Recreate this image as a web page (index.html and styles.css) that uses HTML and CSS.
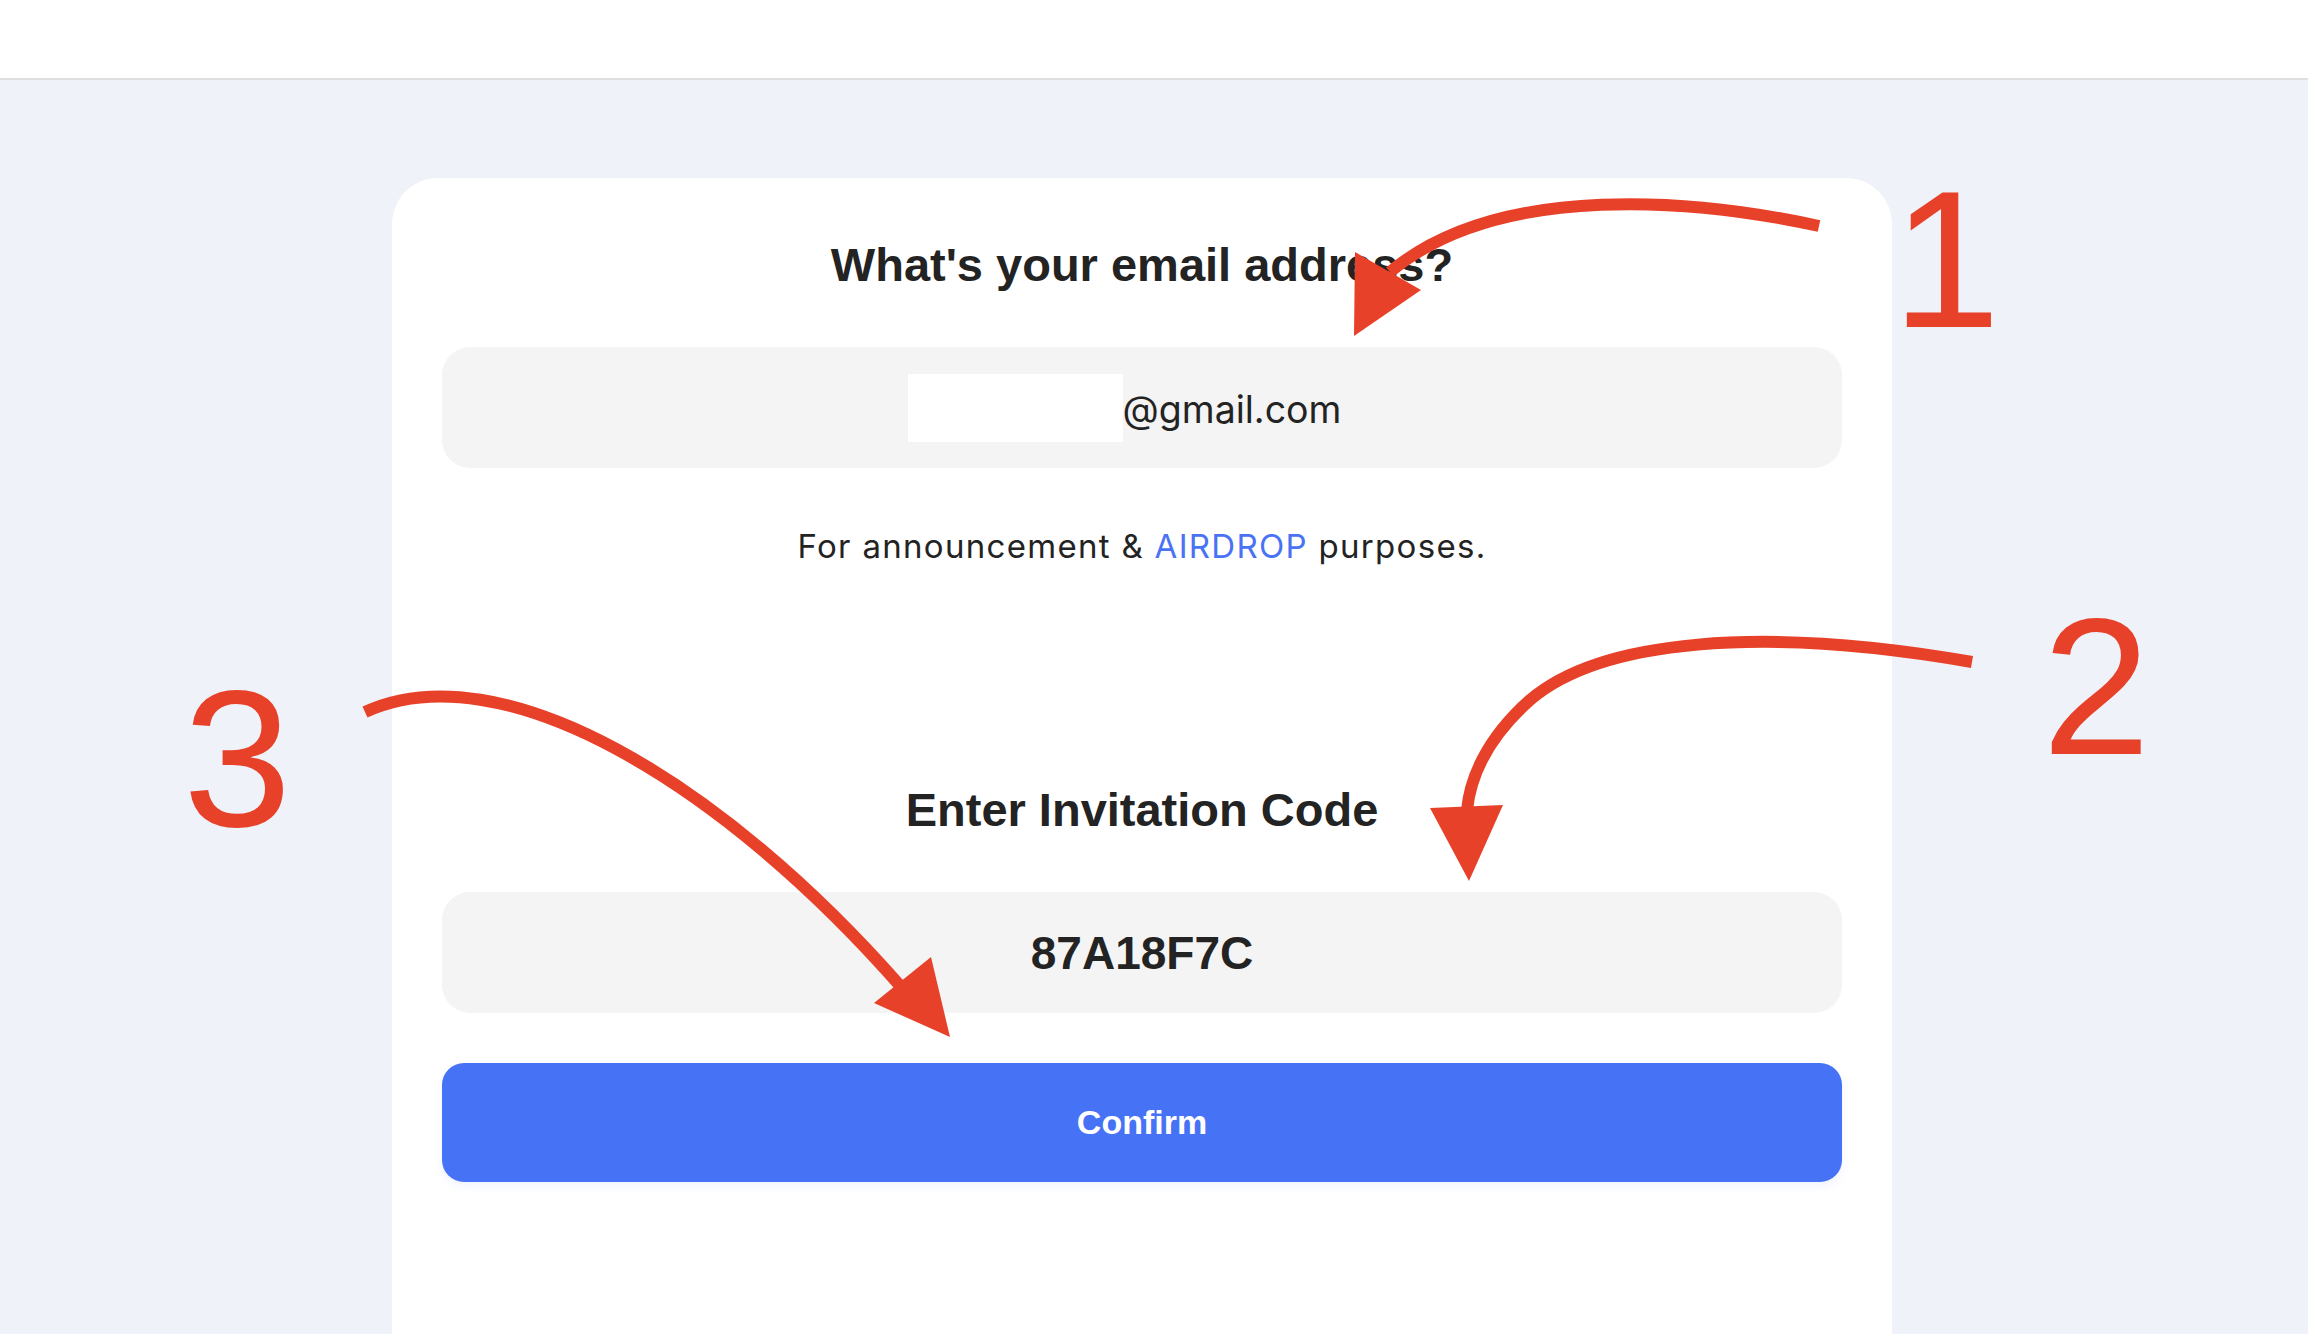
FILE: index.html
```html
<!DOCTYPE html>
<html lang="en">
<head>
<meta charset="utf-8">
<title>Invitation</title>
<link rel="stylesheet" href="styles.css">
</head>
<body>
<header class="topbar"></header>
<main class="stage">
  <section class="card">
    <h2 class="title">What's your email address?</h2>
    <div class="field">
      <div class="email">
        <span class="redact"></span><span class="domain">@gmail.com</span>
      </div>
    </div>
    <p class="hint">For announcement &amp; <span class="link">AIRDROP</span> purposes.</p>
    <h2 class="title title-code">Enter Invitation Code</h2>
    <div class="field">
      <span class="code">87A18F7C</span>
    </div>
    <button class="confirm">Confirm</button>
  </section>
</main>

<div class="num num-1">1</div>
<div class="num num-2">2</div>
<div class="num num-3">3</div>
<svg class="annot" width="2308" height="1334" viewBox="0 0 2308 1334">
  <g fill="none" stroke="#e8412a" stroke-width="12" stroke-linecap="butt">
    <path d="M1819,226 C1700,200 1500,180 1390,272"/>
    <path d="M1972,662 C1760,625 1600,640 1530,700 C1485,740 1470,780 1467,810"/>
    <path d="M365,712 C500,650 720,780 902,988"/>
  </g>
  <g fill="#e8412a">
    <polygon points="1355,252 1421,290 1354,336"/>
    <polygon points="1430,808 1503,805 1469,881"/>
    <polygon points="874,1003 931,957 950,1037"/>
  </g>
</svg>
</body>
</html>
```
FILE: styles.css
```css
html, body {
  margin: 0;
  padding: 0;
}
body {
  width: 2308px;
  height: 1334px;
  overflow: hidden;
  background: #eff2f9;
  font-family: "Liberation Sans", Arial, sans-serif;
  color: #232323;
  position: relative;
}
.topbar {
  height: 78px;
  background: #ffffff;
  border-bottom: 2px solid #dfdfdf;
}
.stage {
  padding-top: 98px;
  padding-left: 392px;
}
.card {
  box-sizing: border-box;
  width: 1500px;
  height: 1156px;
  background: #ffffff;
  border-radius: 46px 46px 0 0;
  padding: 59px 50px 0;
  display: flex;
  flex-direction: column;
  align-items: center;
}
.title {
  margin: 0;
  font-size: 47px;
  line-height: 56px;
  font-weight: 700;
  color: #232323;
  text-align: center;
}
.title-code {
  margin-top: 216px;
}
.field {
  margin-top: 54px;
  width: 100%;
  height: 121px;
  flex: none;
  background: #f4f4f4;
  border-radius: 28px;
  display: flex;
  align-items: center;
  justify-content: center;
}
.email {
  display: flex;
  align-items: center;
  margin-left: -35px;
}
.redact {
  display: block;
  width: 215px;
  height: 68px;
  background: #ffffff;
}
.domain {
  font-family: Inter, "Noto Sans", sans-serif;
  font-size: 37.5px;
  color: #232323;
  line-height: 44px;
  padding-top: 4px;
}
.hint {
  margin: 58px 0 0;
  font-family: Inter, "Noto Sans", sans-serif;
  font-size: 33px;
  line-height: 40px;
  letter-spacing: 1.3px;
  color: #232323;
  text-align: center;
}
.link {
  color: #4a72f5;
}
.code {
  font-size: 46px;
  font-weight: 700;
  color: #232323;
  line-height: 56px;
}
.confirm {
  margin-top: 50px;
  width: 100%;
  height: 119px;
  flex: none;
  border: none;
  border-radius: 22px;
  background: #4672f5;
  color: #ffffff;
  font-family: "Liberation Sans", Arial, sans-serif;
  font-size: 34px;
  font-weight: 700;
  box-shadow: 0 4px 8px rgba(70, 114, 245, 0.08);
}
.annot {
  position: absolute;
  left: 0;
  top: 0;
  pointer-events: none;
}
.num {
  position: absolute;
  font-family: "Liberation Sans", Arial, sans-serif;
  font-size: 195px;
  line-height: 195px;
  color: #e8412a;
}
.num-1 { left: 1892px; top: 162px; }
.num-2 { left: 2042px; top: 589px; }
.num-3 { left: 183px; top: 661px; }
```
